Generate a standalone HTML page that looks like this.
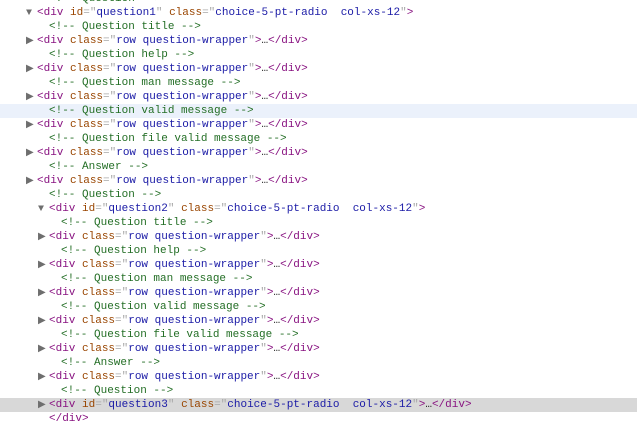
<!DOCTYPE html>
<html><head><style>
body{margin:0;background:#fff;width:637px;height:421px;overflow:hidden;font-family:"Liberation Mono",monospace;font-size:11px;}
.r{position:absolute;left:0;width:637px;height:14px;line-height:15px;white-space:pre;}
.t{color:#881280}.a{color:#994500}.v{color:#1a1aa6}.c{color:#236e25}.g{color:#a8a8a8}.x{color:#222}
</style></head><body>
<div id="w"></div>
<script>
const L=[
[2,'c','<!-- Question -->'],
[1,'D','question1'],
[2,'c','<!-- Question title -->'],[1,'W'],
[2,'c','<!-- Question help -->'],[1,'W'],
[2,'c','<!-- Question man message -->'],[1,'W'],
[2,'c','<!-- Question valid message -->'],[1,'W'],
[2,'c','<!-- Question file valid message -->'],[1,'W'],
[2,'c','<!-- Answer -->'],[1,'W'],
[2,'c','<!-- Question -->'],
[2,'D','question2'],
[3,'c','<!-- Question title -->'],[2,'W'],
[3,'c','<!-- Question help -->'],[2,'W'],
[3,'c','<!-- Question man message -->'],[2,'W'],
[3,'c','<!-- Question valid message -->'],[2,'W'],
[3,'c','<!-- Question file valid message -->'],[2,'W'],
[3,'c','<!-- Answer -->'],[2,'W'],
[3,'c','<!-- Question -->'],
[2,'Q','question3'],
[3,'E']
];
let h='';
L.forEach((l,i)=>{
 const top=-8+i*14;
 let bg='';
 if(i==8)bg='background:#ebf1fb;';
 if(i==29)bg='background:#d8d8d8;';
 let lv=l[0],s='';
 if(l[1]=='c'){s='<span style="position:absolute;left:'+(37+(lv-1)*12)+'px" class="c">'+l[2].replace(/</g,'&lt;').replace(/>/g,'&gt;')+'</span>';}
 else if(l[1]=='E'){s='<span style="position:absolute;left:49px" class="t">&lt;/div&gt;</span>';}
 else{
  const x=25+lv*12;
  const ax=x-11;
  const arrow=(l[1]=='D')?'▼':'▶';
  let body;
  if(l[1]=='W')body='<span class="t">&lt;div </span><span class="a">class</span><span class="g">="</span><span class="v">row question-wrapper</span><span class="g">"</span><span class="t">&gt;</span><span class="x">…</span><span class="t">&lt;/div&gt;</span>';
  else body='<span class="t">&lt;div </span><span class="a">id</span><span class="g">="</span><span class="v">'+l[2]+'</span><span class="g">"</span> <span class="a">class</span><span class="g">="</span><span class="v">choice-5-pt-radio  col-xs-12</span><span class="g">"</span><span class="t">&gt;</span>'+(l[1]=='Q'?'<span class="x">…</span><span class="t">&lt;/div&gt;</span>':'');
  s='<span style="position:absolute;left:'+ax+'px;color:#6e6e6e;font-size:10px">'+arrow+'</span><span style="position:absolute;left:'+x+'px">'+body+'</span>';
 }
 h+='<div class="r" style="top:'+top+'px;'+bg+'">'+s+'</div>';
});
document.getElementById('w').innerHTML=h;
</script>
</body></html>
